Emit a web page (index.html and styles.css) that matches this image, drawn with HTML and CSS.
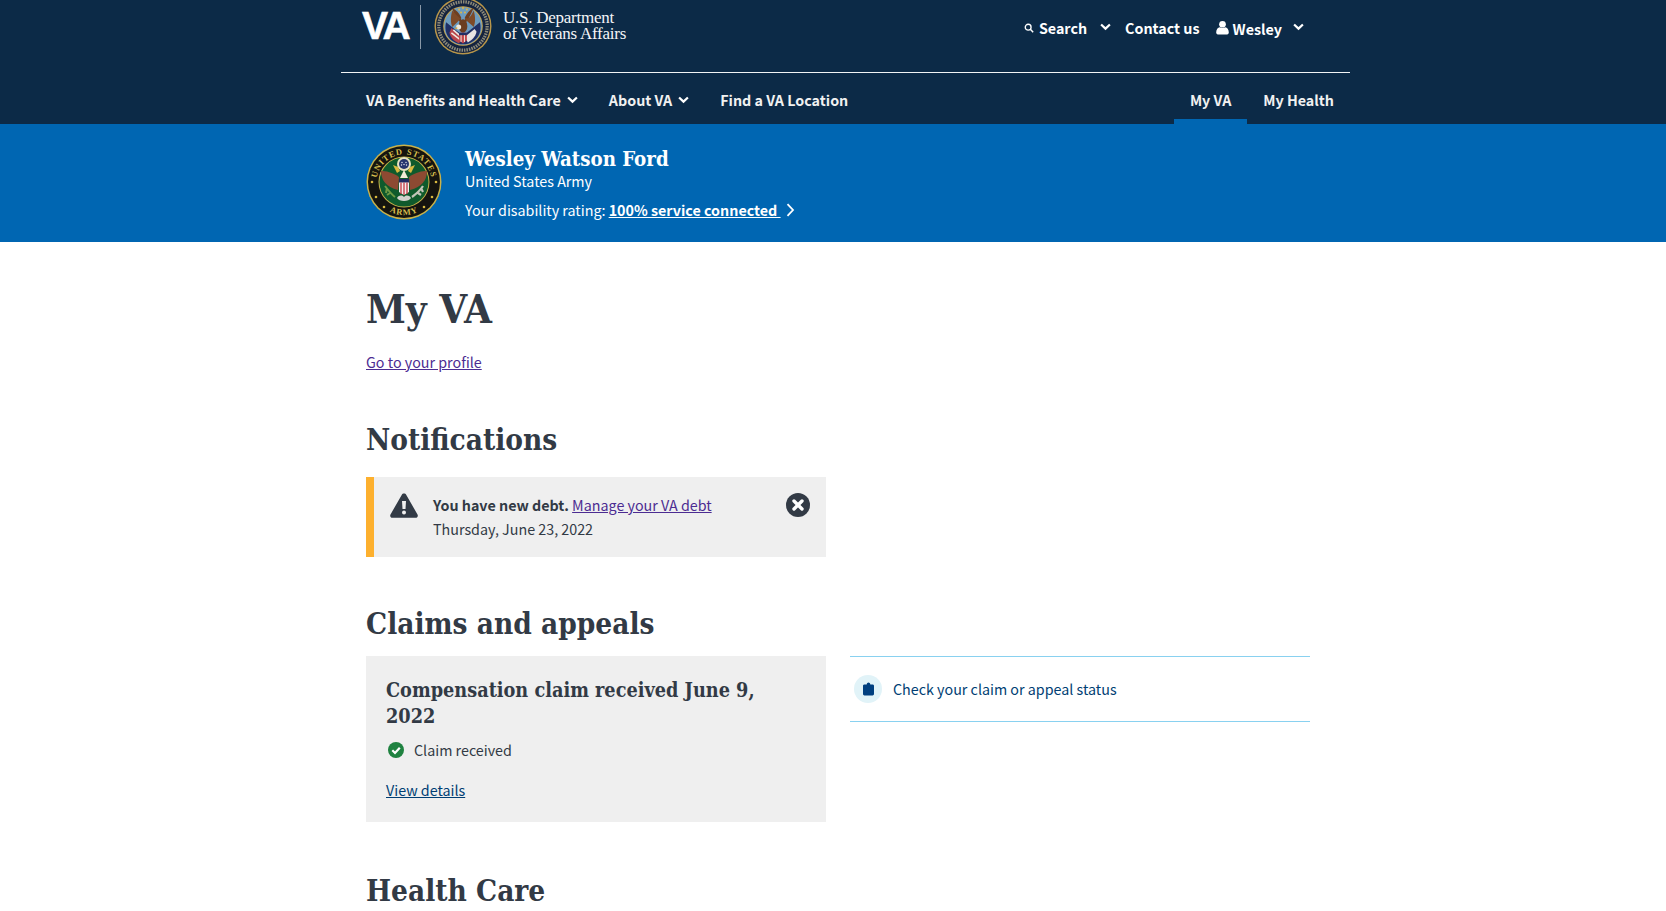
FILE: index.html
```html
<!DOCTYPE html>
<html lang="en">
<head>
<meta charset="utf-8">
<title>My VA</title>
<link rel="stylesheet" href="styles.css">
</head>
<body>
<header class="site-header">
  <div class="header-inner">
    <div class="top-row">
      <div class="brand">
        <span class="va-mark">VA</span>
        <span class="brand-rule"></span>
        <svg class="va-seal" viewBox="0 0 60 60" aria-hidden="true">
          <circle cx="30" cy="30" r="29.5" fill="#b8964a"/>
          <circle cx="30" cy="30" r="28" fill="#14233f"/>
          <circle cx="30" cy="30" r="20.5" fill="#c9a64f"/>
          <circle cx="30" cy="30" r="19.5" fill="#6d9cc0"/>
          <path d="M12.5 26 L30 40 L47.5 26 C49.5 34 47 42 40 46 C34 50 26 50 20 46 C13 42 10.5 34 12.5 26Z" fill="#1f2f66"/>
          <path d="M18 32 L29 41 L26 48 C21 46 17 42 16 37Z" fill="#b8454a"/>
          <path d="M20 34 L28 41 M18 37 L27 44" stroke="#f0e8e0" stroke-width="1.6"/>
          <path d="M42 33 L32 41 L35 47 C39 45 43 41 44 36Z" fill="#e8e4e4"/>
          <path d="M28 27 C24 23 20 17 19 12 C23 13 26 17 28 21 Z M32 27 C36 23 39 16 41 11 C37 13 34 17 32 21Z" fill="#6e3f22"/>
          <path d="M28 21 C26 25 22 28 19 31 C17 27 17 20 19 14 C22 18 25 20 28 23Z M32 21 C35 24 38 21 41 14 C43 20 43 27 41 31 C38 28 34 25 32 23Z" fill="#7d4a29"/>
          <ellipse cx="30" cy="30" rx="4.5" ry="7" fill="#6b3d20"/>
          <circle cx="25.5" cy="31" r="2.6" fill="#efeadd"/>
          <path d="M24 31 L21 32.5 L24 33Z" fill="#d9a93d"/>
          <path d="M26 37 H34 V45 L30 48 L26 45Z" fill="#c2464a"/>
          <path d="M26 37 H34 V39.5 H26Z" fill="#1f2f66"/>
          <path d="M28 39.5 V46.5 M31.5 39.5 V46.5" stroke="#f0ece6" stroke-width="1"/>
          <g fill="#d9b64d"><circle cx="26" cy="13" r="1.1"/><circle cx="30" cy="11.5" r="1.1"/><circle cx="34" cy="13" r="1.1"/><circle cx="28" cy="16" r="1.1"/><circle cx="32" cy="16" r="1.1"/></g>
          <circle cx="30" cy="30" r="25" fill="none" stroke="#8d8a78" stroke-width="3.4" stroke-dasharray="1.6 1"/>
        </svg>
        <span class="dept-name">U.S. Department<br>of Veterans Affairs</span>
      </div>
      <nav class="utility-nav">
        <span class="util-item util-search">
          <svg class="icon-search" viewBox="0 0 12 12" aria-hidden="true"><circle cx="5" cy="5" r="3.5" fill="none" stroke="#fff" stroke-width="1.6"/><path d="M7.6 7.6 L11 11" stroke="#fff" stroke-width="1.8"/></svg>
          <span>Search</span>
          <svg class="chev chev-wide" viewBox="0 0 10 7" aria-hidden="true"><path d="M1 1.2 L5 5 L9 1.2" fill="none" stroke="#fff" stroke-width="2"/></svg>
        </span>
        <span class="util-item util-contact">Contact us</span>
        <span class="util-item util-user">
          <svg class="icon-user" viewBox="0 0 14 15" aria-hidden="true"><circle cx="7" cy="4" r="3.6" fill="#fff"/><path d="M0.2 13 C0.2 9.5 2 7.6 4 7.2 C5.5 8.2 8.5 8.2 10 7.2 C12 7.6 13.8 9.5 13.8 13 C13.8 14.2 13 15 12 15 H2 C1 15 0.2 14.2 0.2 13Z" fill="#fff"/></svg>
          <span class="user-name">Wesley</span>
          <svg class="chev chev-user" viewBox="0 0 10 7" aria-hidden="true"><path d="M1 1.2 L5 5 L9 1.2" fill="none" stroke="#fff" stroke-width="2"/></svg>
        </span>
      </nav>
    </div>
    <nav class="main-nav">
      <div class="nav-left">
        <span class="nav-item nav-first">VA Benefits and Health Care
          <svg class="chev" viewBox="0 0 10 7" aria-hidden="true"><path d="M1 1.2 L5 5 L9 1.2" fill="none" stroke="#fff" stroke-width="2"/></svg></span>
        <span class="nav-item">About VA
          <svg class="chev" viewBox="0 0 10 7" aria-hidden="true"><path d="M1 1.2 L5 5 L9 1.2" fill="none" stroke="#fff" stroke-width="2"/></svg></span>
        <span class="nav-item">Find a VA Location</span>
      </div>
      <div class="nav-right">
        <span class="nav-tab nav-tab-active">My VA</span>
        <span class="nav-tab">My Health</span>
      </div>
    </nav>
  </div>
</header>

<section class="hero">
  <div class="hero-inner">
    <svg class="army-seal" viewBox="0 0 76 76" aria-hidden="true">
      <defs><path id="arcTop" d="M10.500 38 A27.500 27.500 0 0 1 65.500 38"/><path id="arcBot" d="M5 38 A33 33 0 0 0 71 38"/></defs>
      <circle cx="38" cy="38" r="37.5" fill="#c9b24a"/>
      <circle cx="38" cy="38" r="36" fill="#15140f"/>
      <circle cx="38" cy="38" r="25.500" fill="#c9b24a"/>
      <circle cx="38" cy="38" r="24.500" fill="#0f5a2c"/>
      <text class="seal-text"><textPath href="#arcTop" startOffset="50%" text-anchor="middle">UNITED STATES</textPath></text>
      <text class="seal-text"><textPath href="#arcBot" startOffset="50%" text-anchor="middle">ARMY</textPath></text>
      <g fill="#d9b93f"><circle cx="6" cy="38" r="1.3"/><circle cx="70" cy="38" r="1.3"/><circle cx="10" cy="53" r="1.3"/><circle cx="66" cy="53" r="1.3"/><circle cx="18" cy="63" r="1.3"/><circle cx="58" cy="63" r="1.3"/></g>
      <circle cx="38" cy="20" r="7" fill="#e8e2c0"/>
      <circle cx="38" cy="20" r="5" fill="#26346e"/>
      <g fill="#e8e8f0"><circle cx="36" cy="18.500" r=".7"/><circle cx="40" cy="18.500" r=".7"/><circle cx="38" cy="20.500" r=".7"/><circle cx="35.500" cy="21" r=".7"/><circle cx="40.500" cy="21" r=".7"/></g>
      <path d="M27 21 L31 29 L34 27 L32 23Z M49 21 L45 29 L42 27 L44 23Z" fill="#d9b93f"/>
      <path d="M33 33 C26 28 20 27 15 27 C15 36 20 43 32 46Z" fill="#8d4a32"/>
      <path d="M43 33 C50 28 56 27 61 27 C61 36 56 43 44 46Z" fill="#8d4a32"/>
      <path d="M34 34 L38 26 L42 34Z" fill="#f1ecd8"/>
      <path d="M33 35 H43 V48 L38 51 L33 48Z" fill="#f3eded"/>
      <path d="M33 35 H43 V38.500 H33Z" fill="#1f2a63"/>
      <path d="M35 38.500 V50 M38 38.500 V51 M41 38.500 V50" stroke="#c43a44" stroke-width="1.3"/>
      <path d="M19 42 C22 46 25 50 29 53 M21 44 L20 49 M24 49 L21 51" stroke="#6f9a45" stroke-width="2" fill="none"/>
      <path d="M57 42 C54 47 50 50 46 53 M55 44 L57 48 M52 49 L55 51" stroke="#c2c4b8" stroke-width="2.2" fill="none"/>
      <path d="M31 54 C33 51 36 51 38 53 C40 51 43 51 45 54 C43 58 33 58 31 54Z" fill="#d2d2cc"/>
    </svg>
    <div class="hero-text">
      <h2 class="hero-name">Wesley Watson Ford</h2>
      <p class="hero-branch">United States Army</p>
      <p class="hero-rating">Your disability rating: <a class="hero-link" href="#">100% service connected&nbsp;</a>
        <svg class="hero-arrow" viewBox="0 0 9 14" aria-hidden="true"><path d="M1.5 1.200 L7 7 L1.500 12.800" fill="none" stroke="#fff" stroke-width="1.800"/></svg></p>
    </div>
  </div>
</section>

<main class="content">
  <h1 class="page-title">My VA</h1>
  <p class="profile-row"><a class="link-visited" href="#">Go to your profile</a></p>

  <h2 class="section-title section-notifications">Notifications</h2>
  <div class="alert">
    <svg class="alert-icon" viewBox="0 0 28 25" aria-hidden="true"><path fill-rule="evenodd" d="M14 0.500 C15 0.500 15.800 1 16.300 1.900 L27.500 21.500 C28.400 23 27.300 24.800 25.600 24.800 H2.400 C0.700 24.800 -0.400 23 0.500 21.500 L11.700 1.900 C12.200 1 13 0.500 14 0.500Z M12 8 L12.500 16 H15.500 L16 8Z M14 17.500 A2 2 0 1 0 14 21.500 A2 2 0 1 0 14 17.500Z" fill="#323a45"/></svg>
    <div class="alert-body">
      <p class="alert-line"><strong>You have new debt.</strong> <a class="link-visited" href="#">Manage your VA debt</a></p>
      <p class="alert-line">Thursday, June 23, 2022</p>
    </div>
    <svg class="alert-close" viewBox="0 0 24 24" aria-hidden="true"><circle cx="12" cy="12" r="12" fill="#323a45"/><path d="M8 8 L16 16 M16 8 L8 16" stroke="#fff" stroke-width="3.400" stroke-linecap="round"/></svg>
  </div>

  <h2 class="section-title section-claims">Claims and appeals</h2>
  <div class="two-col">
    <div class="claim-card">
      <h3 class="claim-title">Compensation claim received June 9, 2022</h3>
      <div class="claim-status">
        <svg class="status-icon" viewBox="0 0 16 16" aria-hidden="true"><circle cx="8" cy="8" r="8" fill="#1f8240"/><path d="M4.300 8.300 L7 11 L11.800 5.800" fill="none" stroke="#fff" stroke-width="2.200"/></svg>
        <span>Claim received</span>
      </div>
      <a class="link-primary" href="#">View details</a>
    </div>
    <div class="side-links">
      <a class="side-link" href="#">
        <span class="side-icon"><svg viewBox="0 0 12 14" aria-hidden="true"><path fill-rule="evenodd" d="M4 2 C4.300 0.800 5 0 6 0 C7 0 7.700 0.800 8 2 H10.500 C11.300 2 12 2.700 12 3.500 V12.500 C12 13.300 11.300 14 10.500 14 H1.500 C0.700 14 0 13.300 0 12.500 V3.500 C0 2.700 0.700 2 1.500 2Z" fill="#003f7f"/></svg></span>
        <span>Check your claim or appeal status</span>
      </a>
    </div>
  </div>

  <h2 class="section-title section-health">Health Care</h2>
</main>
</body>
</html>
```
FILE: styles.css
```css
* { box-sizing: border-box; }
html, body { margin: 0; padding: 0; background: #fff; overflow: hidden; height: 911px; }
body {
  font-family: "Noto Sans CJK SC", "Noto Sans", sans-serif;
  font-size: 14.300px;
  line-height: 24px;
  color: #323a45;
}
p, h1, h2, h3 { margin: 0; }
a { color: inherit; }

.site-header { background: #0c2a47; height: 124px; color: #fff; }
.header-inner { width: 1009px; margin-left: 341px; }
.top-row {
  height: 73px;
  border-bottom: 1px solid #f2f4f6;
  display: flex;
  justify-content: space-between;
  align-items: flex-start;
}
.brand { display: flex; align-items: flex-start; padding-left: 21px; }
.va-mark {
  font-family: "Liberation Sans", sans-serif;
  font-weight: 700;
  font-size: 39px;
  line-height: 40px;
  letter-spacing: -2.600px;
  width: 58px;
  margin-top: 6px;
  -webkit-text-stroke: .6px #fff;
}
.brand-rule { width: 1px; height: 44px; background: #8a99a8; margin-top: 5px; }
.va-seal { width: 58px; height: 58px; margin: -3px 0 0 13px; }
.dept-name {
  font-family: "Liberation Serif", serif;
  font-size: 17px;
  letter-spacing: -.25px;
  line-height: 16px;
  margin: 10px 0 0 11px;
  color: #f4f5f7;
}
.utility-nav { display: flex; align-items: center; height: 56px; font-weight: 700; margin-right: 46px; }
.util-item { display: flex; align-items: center; }
.icon-search { width: 10px; height: 10px; margin-right: 5px; }
.chev { width: 11px; height: 8px; }
.chev-wide { margin-left: 13px; margin-top: -2px; }
.chev-user { margin-left: 11px; margin-top: -2px; }
.util-contact { margin-left: 14px; }
.util-user { margin-left: 16px; }
.icon-user { width: 13px; height: 15px; margin: -2px 4px 0 0; }
.user-name { margin-top: 2px; }

.main-nav { display: flex; justify-content: space-between; height: 51px; font-weight: 700; color: #f1f1f1; }
.nav-left { display: flex; align-items: center; padding: 2px 0 0 25px; }
.nav-item { display: inline-flex; align-items: center; gap: 6px; margin-right: 31px; }
.nav-right { display: flex; }
.nav-tab { display: flex; align-items: center; padding: 2px 16px 0; height: 51px; }
.nav-tab-active { box-shadow: inset 0 -5px 0 #0066b2; }

.hero { background: #0066b2; height: 118px; color: #fff; }
.hero-inner { margin-left: 366px; display: flex; align-items: flex-start; padding-top: 21px; }
.army-seal { width: 76px; height: 76px; flex: none; margin-top: -1px; }
.seal-text { font-family: "Liberation Serif", serif; font-size: 8.500px; font-weight: 700; fill: #d8bf4e; letter-spacing: .9px; }
.hero-text { margin: 1px 0 0 23px; }
.hero-name { font-family: "DejaVu Serif Condensed", "DejaVu Serif", serif; font-stretch: condensed; font-size: 20.300px; line-height: 26px; font-weight: 700; }
.hero-branch { margin-top: -3px; line-height: 24px; }
.hero-rating { margin-top: 5px; line-height: 24px; display: flex; align-items: center; white-space: pre; }
.hero-link { font-weight: 700; }
.hero-arrow { width: 9px; height: 14px; margin-left: 5px; }

.content { padding-left: 366px; width: 1310px; }
.page-title { font-family: "DejaVu Serif Condensed", "DejaVu Serif", serif; font-stretch: condensed; font-size: 40px; line-height: 48px; font-weight: 700; margin-top: 43px; }
.profile-row { margin-top: 17px; }
.link-visited { color: #4c2c92; }
.link-primary { color: #003e73; }
.section-title { font-family: "DejaVu Serif Condensed", "DejaVu Serif", serif; font-stretch: condensed; font-size: 29.500px; line-height: 36px; font-weight: 700; }
.section-notifications { margin-top: 48px; }
.section-claims { margin-top: 49px; }
.section-health { margin-top: 51px; }

.alert {
  width: 460px;
  height: 80px;
  margin-top: 19px;
  background: #efefef;
  border-left: 8px solid #fdb02e;
  display: flex;
  align-items: flex-start;
  padding: 16px 16px 0 16px;
}
.alert-icon { width: 28px; height: 25px; flex: none; }
.alert-body { margin-left: 15px; flex: 1; }
.alert-line { line-height: 24px; }
.alert-close { width: 24px; height: 24px; flex: none; }

.two-col { display: flex; gap: 24px; margin-top: 14px; align-items: flex-start; }
.claim-card { width: 460px; height: 166px; background: #efefef; padding: 22px 20px 0; flex: none; }
.claim-title { font-family: "DejaVu Serif Condensed", "DejaVu Serif", serif; font-stretch: condensed; font-size: 19.700px; line-height: 26px; font-weight: 700; }
.claim-status { display: flex; align-items: center; gap: 10px; margin: 8px 0 16px 2px; }
.status-icon { width: 16px; height: 16px; }
.side-links { width: 460px; }
.side-link {
  height: 66px;
  border-top: 1px solid #89d1f0;
  border-bottom: 1px solid #89d1f0;
  display: flex;
  align-items: center;
  gap: 11px;
  padding-left: 4px;
  color: #003e73;
  text-decoration: none;
}
.side-icon { width: 28px; height: 28px; border-radius: 50%; background: #e1f3f8; display: flex; align-items: center; justify-content: center; }
.side-icon svg { width: 11px; height: 14px; }
```
